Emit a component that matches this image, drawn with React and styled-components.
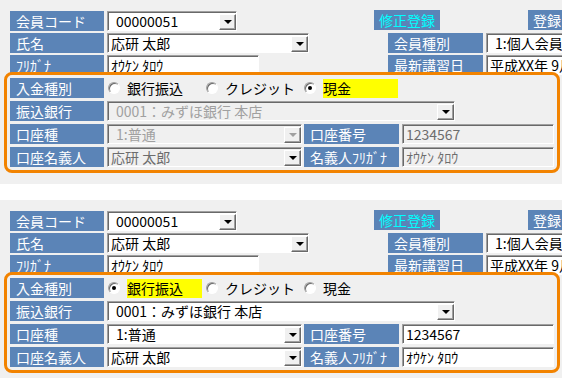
import React from 'react';
import styled, { createGlobalStyle } from 'styled-components';

const GlobalStyle = createGlobalStyle`
  body {
    margin: 0;
    background: #ffffff;
    font-family: "Noto Sans CJK JP", "Noto Sans", sans-serif;
  }
`;

const Page = styled.div`
  width: 562px;
  height: 378px;
  overflow: hidden;
  display: flex;
  flex-direction: column;
  gap: 16px;
`;

// one form screen
const Panel = styled.div`
  flex-shrink: 0;
  height: ${(p) => p.h}px;
  box-sizing: border-box;
  background: #f0f0f0;
  padding: 11px 0 0 10px;
  overflow: hidden;
  display: flex;
  flex-direction: column;
  gap: 2px;
`;

const Row = styled.div`
  display: flex;
  align-items: center;
  height: 20px;
  flex-shrink: 0;
`;

const Label = styled.div`
  flex-shrink: 0;
  box-sizing: border-box;
  width: ${(p) => p.w || 94}px;
  height: 20px;
  margin-left: ${(p) => p.ml || 0}px;
  padding-left: 6px;
  background: #5b84b7;
  color: #ffffff;
  font-size: 14px;
  line-height: 20px;
  white-space: nowrap;
  overflow: hidden;
`;

const ActionButton = styled.div`
  flex-shrink: 0;
  box-sizing: border-box;
  width: ${(p) => p.w}px;
  height: 20px;
  margin-left: ${(p) => p.ml}px;
  margin-top: -2px;
  padding-left: 5px;
  background: #5b84b7;
  color: ${(p) => p.color};
  font-size: 14px;
  line-height: 20px;
  white-space: nowrap;
`;

const Field = styled.div`
  flex-shrink: 0;
  box-sizing: border-box;
  width: ${(p) => p.w}px;
  height: 20px;
  margin-left: ${(p) => (p.ml === undefined ? 3 : p.ml)}px;
  display: flex;
  align-items: center;
  border-style: solid;
  border-width: 1px;
  border-color: #a0a0a0 #ffffff #ffffff #a0a0a0;
  box-shadow: inset 1px 1px 0 #696969;
  background: ${(p) => (p.off ? '#f0f0f0' : '#ffffff')};
  color: ${(p) => p.tone || '#000000'};
  font-size: 14px;
  white-space: nowrap;
  overflow: hidden;
`;

const FieldText = styled.span`
  flex: 1;
  padding-left: ${(p) => p.pad || 3}px;
  line-height: 18px;
  overflow: hidden;
`;

const DropButton = styled.div`
  flex-shrink: 0;
  box-sizing: border-box;
  width: 17px;
  height: 16px;
  margin: 1px 0 0 0;
  display: flex;
  align-items: center;
  justify-content: center;
  background: #f0f0f0;
  border-style: solid;
  border-width: 1px;
  border-color: #ffffff #696969 #696969 #ffffff;
  box-shadow: inset -1px -1px 0 #a0a0a0;

  &::after {
    content: '';
    border-left: 4px solid transparent;
    border-right: 4px solid transparent;
    border-top: 4px solid ${(p) => (p.off ? '#a0a0a0' : '#000000')};
  }
`;

const Frame = styled.div`
  flex-shrink: 0;
  box-sizing: border-box;
  width: 556px;
  margin: -5px 0 0 -6px;
  padding: 3px;
  border: 3px solid #f28300;
  border-radius: 8px;
  display: flex;
  flex-direction: column;
  gap: 3px;
`;

const Options = styled.div`
  display: flex;
  align-items: center;
  margin-left: 4px;
`;

const Option = styled.div`
  display: flex;
  align-items: center;
  margin-right: 4px;
`;

const Radio = styled.span`
  box-sizing: border-box;
  width: 12px;
  height: 12px;
  border-radius: 50%;
  border: 1px solid;
  border-color: #a0a0a0 #ffffff #ffffff #a0a0a0;
  box-shadow: inset 1px 1px 0 #696969;
  background: #ffffff;
  display: flex;
  align-items: center;
  justify-content: center;

  &::after {
    content: '';
    width: 4px;
    height: 4px;
    border-radius: 50%;
    background: ${(p) => (p.on ? '#000000' : 'transparent')};
  }
`;

const OptionText = styled.span`
  box-sizing: border-box;
  width: 75px;
  height: 19px;
  margin-left: 7px;
  background: ${(p) => (p.on ? '#ffff00' : 'transparent')};
  font-size: 14px;
  line-height: 19px;
  color: #000000;
  white-space: nowrap;
`;

const Combo = ({ w, ml, text, pad, off, tone, arrowOff }) => (
  <Field w={w} ml={ml} off={off} tone={tone}>
    <FieldText pad={pad}>{text}</FieldText>
    <DropButton off={arrowOff} />
  </Field>
);

const Input = ({ w, ml, text, pad, off, tone }) => (
  <Field w={w} ml={ml} off={off} tone={tone}>
    <FieldText pad={pad}>{text}</FieldText>
  </Field>
);

const payments = ['銀行振込', 'クレジット', '現金'];

const MemberForm = ({ h, method, locked }) => {
  const grey = '#a0a0a0';
  return (
    <Panel h={h}>
      <Row>
        <Label>会員コード</Label>
        <Combo w={130} pad={8} text="00000051" />
        <ActionButton w={66} ml={137} color="#00ffff">修正登録</ActionButton>
        <ActionButton w={50} ml={88} color="#ffffff">登録</ActionButton>
      </Row>
      <Row>
        <Label>氏名</Label>
        <Combo w={202} text="応研 太郎" />
        <Label w={95} ml={79}>会員種別</Label>
        <Input w={110} pad={8} text="1:個人会員" />
      </Row>
      <Row>
        <Label>ﾌﾘｶﾞﾅ</Label>
        <Input w={152} text="ｵｳｹﾝ ﾀﾛｳ" />
        <Label w={95} ml={129}>最新講習日</Label>
        <Input w={110} pad={3} text="平成XX年 9月" />
      </Row>
      <Frame>
        <Row>
          <Label>入金種別</Label>
          <Options>
            {payments.map((p) => (
              <Option key={p}>
                <Radio on={p === method} />
                <OptionText on={p === method}>{p}</OptionText>
              </Option>
            ))}
          </Options>
        </Row>
        <Row>
          <Label>振込銀行</Label>
          <Combo
            w={348}
            pad={8}
            off={locked}
            tone={locked ? grey : '#000'}
            text="0001：みずほ銀行 本店"
          />
        </Row>
        <Row>
          <Label>口座種</Label>
          <Combo
            w={195}
            pad={8}
            off={locked}
            tone={locked ? grey : '#000'}
            arrowOff={locked}
            text="1:普通"
          />
          <Label w={95} ml={2}>口座番号</Label>
          <Input w={152} off={locked} tone={locked ? '#6d6d6d' : '#000'} text="1234567" />
        </Row>
        <Row>
          <Label>口座名義人</Label>
          <Combo
            w={195}
            off={locked}
            tone={locked ? '#6d6d6d' : '#000'}
            text="応研 太郎"
          />
          <Label w={95} ml={2}>名義人ﾌﾘｶﾞﾅ</Label>
          <Input w={152} off={locked} tone={locked ? '#6d6d6d' : '#000'} text="ｵｳｹﾝ ﾀﾛｳ" />
        </Row>
      </Frame>
    </Panel>
  );
};

export default function App() {
  return (
    <Page>
      <GlobalStyle />
      <MemberForm h={184} method="現金" locked />
      <MemberForm h={178} method="銀行振込" />
    </Page>
  );
}
